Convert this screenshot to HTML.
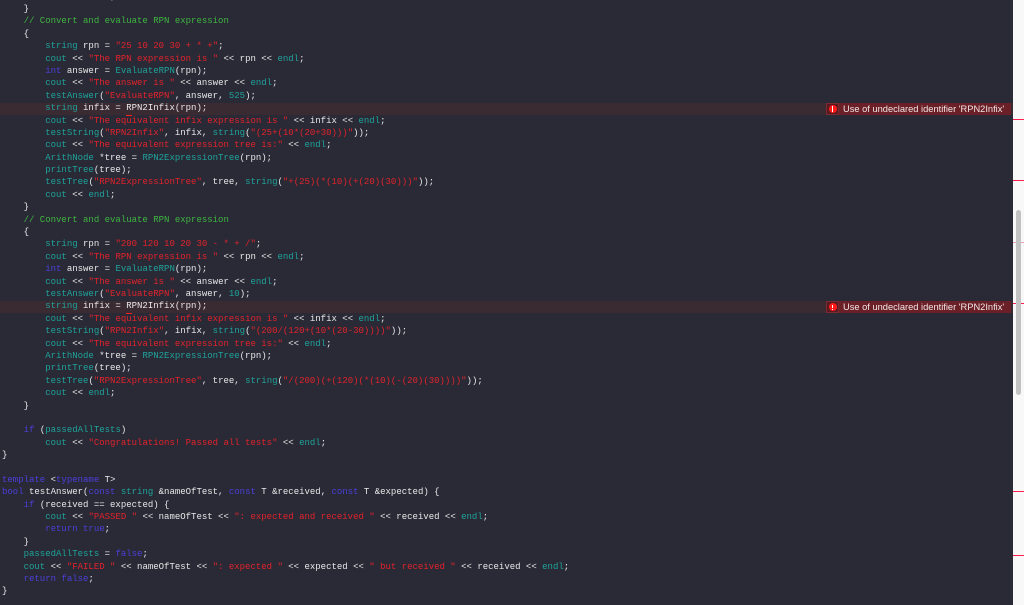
<!DOCTYPE html>
<html><head><meta charset="utf-8">
<style>
html,body{margin:0;padding:0;}
body{width:1024px;height:605px;overflow:hidden;background:#292a35;position:relative;font-family:"Liberation Mono",monospace;}
#code{position:absolute;left:2px;top:-9.4px;margin:0;font-family:"Liberation Mono",monospace;font-size:9px;line-height:12.39px;color:#e8e8ea;white-space:pre;}
.k{color:#4d3fdc}.t{color:#1fa39b}.s{color:#e3222c}.c{color:#3fb541}
.err{position:absolute;left:0;width:1013px;height:12.4px;background:#3a2a31;}
.badge{position:absolute;left:826px;width:185px;height:12.4px;background:#6b1f26;font-family:"Liberation Sans",sans-serif;font-size:9.3px;color:#f0e6e6;line-height:12.4px;}
.badge .ic{position:absolute;left:0;top:0;width:13px;height:12.4px;background:#5a1a20;border:1px solid #7a2a30;box-sizing:border-box;}
.badge .ic:after{content:"";position:absolute;left:1.5px;top:1.2px;width:8px;height:8px;border-radius:50%;background:#ff1a1a;}
.badge .ic b{position:absolute;left:4.7px;top:2.6px;width:1.4px;height:3.2px;background:#fff;z-index:2;}
.badge .ic i{position:absolute;left:4.7px;top:6.6px;width:1.4px;height:1.2px;background:#fff;z-index:2;}
.badge span{position:absolute;left:17px;top:0;white-space:nowrap;}
.sq{position:absolute;width:6px;height:1px;background:#ff2020;}
#strip{position:absolute;left:1013px;top:0;width:11px;height:605px;background:#f8f8f8;}
.tick{position:absolute;left:1013px;width:11px;height:1px;background:#ff1f4f;}
#thumb{position:absolute;left:1016px;top:210px;width:5px;height:185px;background:#c2c2c2;border-radius:3px;}
</style></head><body>
<div class="err" style="top:102.8px"></div>
<div class="err" style="top:301.1px"></div>
<div class="badge" style="top:102.8px"><div class="ic"><b></b><i></i></div><span>Use of undeclared identifier 'RPN2Infix'</span></div>
<div class="badge" style="top:301.1px"><div class="ic"><b></b><i></i></div><span>Use of undeclared identifier 'RPN2Infix'</span></div>
<pre id="code">        <span class="t">cout</span> &lt;&lt; <span class="t">endl</span>;
    }
    <span class="c">// Convert and evaluate RPN expression</span>
    {
        <span class="t">string</span> rpn = <span class="s">"25 10 20 30 + * +"</span>;
        <span class="t">cout</span> &lt;&lt; <span class="s">"The RPN expression is "</span> &lt;&lt; rpn &lt;&lt; <span class="t">endl</span>;
        <span class="k">int</span> answer = <span class="t">EvaluateRPN</span>(rpn);
        <span class="t">cout</span> &lt;&lt; <span class="s">"The answer is "</span> &lt;&lt; answer &lt;&lt; <span class="t">endl</span>;
        <span class="t">testAnswer</span>(<span class="s">"EvaluateRPN"</span>, answer, <span class="t">525</span>);
        <span class="t">string</span> infix = RPN2Infix(rpn);
        <span class="t">cout</span> &lt;&lt; <span class="s">"The equivalent infix expression is "</span> &lt;&lt; infix &lt;&lt; <span class="t">endl</span>;
        <span class="t">testString</span>(<span class="s">"RPN2Infix"</span>, infix, <span class="t">string</span>(<span class="s">"(25+(10*(20+30)))"</span>));
        <span class="t">cout</span> &lt;&lt; <span class="s">"The equivalent expression tree is:"</span> &lt;&lt; <span class="t">endl</span>;
        <span class="t">ArithNode</span> *tree = <span class="t">RPN2ExpressionTree</span>(rpn);
        <span class="t">printTree</span>(tree);
        <span class="t">testTree</span>(<span class="s">"RPN2ExpressionTree"</span>, tree, <span class="t">string</span>(<span class="s">"+(25)(*(10)(+(20)(30)))"</span>));
        <span class="t">cout</span> &lt;&lt; <span class="t">endl</span>;
    }
    <span class="c">// Convert and evaluate RPN expression</span>
    {
        <span class="t">string</span> rpn = <span class="s">"200 120 10 20 30 - * + /"</span>;
        <span class="t">cout</span> &lt;&lt; <span class="s">"The RPN expression is "</span> &lt;&lt; rpn &lt;&lt; <span class="t">endl</span>;
        <span class="k">int</span> answer = <span class="t">EvaluateRPN</span>(rpn);
        <span class="t">cout</span> &lt;&lt; <span class="s">"The answer is "</span> &lt;&lt; answer &lt;&lt; <span class="t">endl</span>;
        <span class="t">testAnswer</span>(<span class="s">"EvaluateRPN"</span>, answer, <span class="t">10</span>);
        <span class="t">string</span> infix = RPN2Infix(rpn);
        <span class="t">cout</span> &lt;&lt; <span class="s">"The equivalent infix expression is "</span> &lt;&lt; infix &lt;&lt; <span class="t">endl</span>;
        <span class="t">testString</span>(<span class="s">"RPN2Infix"</span>, infix, <span class="t">string</span>(<span class="s">"(200/(120+(10*(20-30))))"</span>));
        <span class="t">cout</span> &lt;&lt; <span class="s">"The equivalent expression tree is:"</span> &lt;&lt; <span class="t">endl</span>;
        <span class="t">ArithNode</span> *tree = <span class="t">RPN2ExpressionTree</span>(rpn);
        <span class="t">printTree</span>(tree);
        <span class="t">testTree</span>(<span class="s">"RPN2ExpressionTree"</span>, tree, <span class="t">string</span>(<span class="s">"/(200)(+(120)(*(10)(-(20)(30))))"</span>));
        <span class="t">cout</span> &lt;&lt; <span class="t">endl</span>;
    }

    <span class="k">if</span> (<span class="t">passedAllTests</span>)
        <span class="t">cout</span> &lt;&lt; <span class="s">"Congratulations! Passed all tests"</span> &lt;&lt; <span class="t">endl</span>;
}

<span class="k">template</span> &lt;<span class="k">typename</span> T&gt;
<span class="k">bool</span> testAnswer(<span class="k">const</span> <span class="t">string</span> &amp;nameOfTest, <span class="k">const</span> T &amp;received, <span class="k">const</span> T &amp;expected) {
    <span class="k">if</span> (received == expected) {
        <span class="t">cout</span> &lt;&lt; <span class="s">"PASSED "</span> &lt;&lt; nameOfTest &lt;&lt; <span class="s">": expected and received "</span> &lt;&lt; received &lt;&lt; <span class="t">endl</span>;
        <span class="k">return</span> <span class="k">true</span>;
    }
    <span class="t">passedAllTests</span> = <span class="k">false</span>;
    <span class="t">cout</span> &lt;&lt; <span class="s">"FAILED "</span> &lt;&lt; nameOfTest &lt;&lt; <span class="s">": expected "</span> &lt;&lt; expected &lt;&lt; <span class="s">" but received "</span> &lt;&lt; received &lt;&lt; <span class="t">endl</span>;
    <span class="k">return</span> <span class="k">false</span>;
}
</pre>
<div class="sq" style="left:126px;top:114.5px"></div>
<div class="sq" style="left:126px;top:312.8px"></div>
<div id="strip"></div>
<div class="tick" style="top:119px"></div>
<div class="tick" style="top:180px"></div>
<div class="tick" style="top:242px;background:#f0a0b0"></div>
<div class="tick" style="top:303px"></div>
<div class="tick" style="top:491px"></div>
<div class="tick" style="top:555px"></div>
<div id="thumb"></div>
</body></html>
